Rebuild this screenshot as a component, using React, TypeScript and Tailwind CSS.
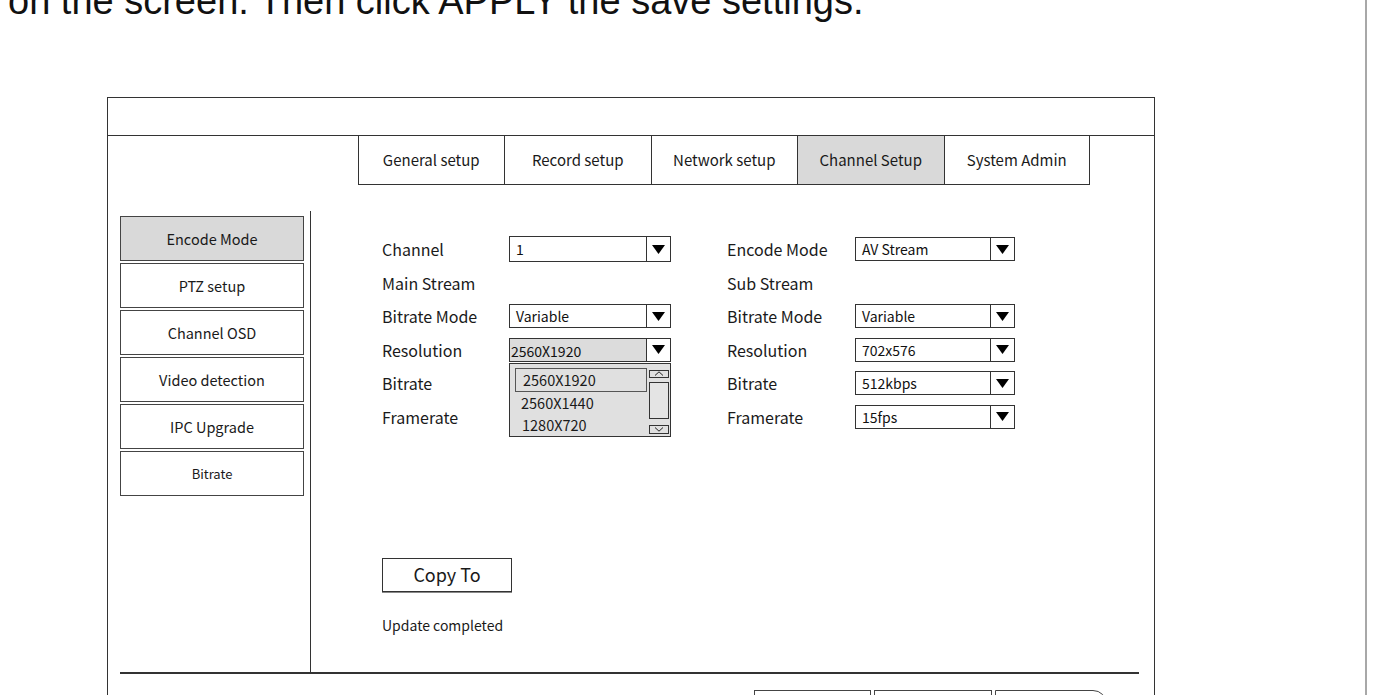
import React from 'react'

const ui = "font-['Noto_Sans_CJK_SC','Noto_Sans',sans-serif]"

type Row = {
  left: string
  leftValue?: string
  right: string
  rightValue?: string
}

const rows: Row[] = [
  { left: 'Channel', leftValue: '1', right: 'Encode Mode', rightValue: 'AV Stream' },
  { left: 'Main Stream', right: 'Sub Stream' },
  { left: 'Bitrate Mode', leftValue: 'Variable', right: 'Bitrate Mode', rightValue: 'Variable' },
  { left: 'Resolution', leftValue: '2560X1920', right: 'Resolution', rightValue: '702x576' },
  { left: 'Bitrate', right: 'Bitrate', rightValue: '512kbps' },
  { left: 'Framerate', right: 'Framerate', rightValue: '15fps' },
]

const tabs = ['General setup', 'Record setup', 'Network setup', 'Channel Setup', 'System Admin']
const menu = ['Encode Mode', 'PTZ setup', 'Channel OSD', 'Video detection', 'IPC Upgrade', 'Bitrate']

function Arrow() {
  return (
    <svg width="13" height="9" viewBox="0 0 13 9">
      <path d="M0 0h13L6.5 9z" fill="#000" />
    </svg>
  )
}

function Chevron({ up }: { up?: boolean }) {
  return (
    <svg width="10" height="5" viewBox="0 0 10 5">
      <path d={up ? 'M1 4.5L5 0.8L9 4.5' : 'M1 0.5L5 4.2L9 0.5'} fill="none" stroke="#222" strokeWidth="1" />
    </svg>
  )
}

function Dropdown() {
  return (
    <div className="absolute -left-px top-full z-10 mt-[2px] flex h-[74px] w-[162px] border border-[#333] bg-[#e0e0e0]">
      <div className="flex flex-1 flex-col pl-[5px] pt-[4px] text-[14.5px] leading-none">
        <div className="flex h-[24px] w-[132px] items-center border-[1.5px] border-[#555] pl-[7px]">2560X1920</div>
        <div className="flex h-[22px] items-center pl-[6px]">2560X1440</div>
        <div className="flex h-[22px] items-center pl-[7px]">1280X720</div>
      </div>
      <div className="mr-[1px] flex w-[20px] flex-col pt-[6px]">
        <div className="flex h-[8px] items-center justify-center border border-[#333]">
          <Chevron up />
        </div>
        <div className="mt-[4px] h-[37px] border border-[#333] bg-[#e4e4e4]" />
        <div className="mt-[6px] flex h-[9px] items-center justify-center border border-[#333]">
          <Chevron />
        </div>
      </div>
    </div>
  )
}

function Select({ value, tall, shaded, open, wide }: { value: string; tall?: boolean; shaded?: boolean; open?: boolean; wide?: boolean }) {
  return (
    <div
      className={`relative flex border border-[#333] bg-white ${tall ? 'h-[26px]' : 'h-[24px]'} ${wide ? 'w-[162px]' : 'w-[160px]'}`}
    >
      <div
        className={`flex flex-1 items-center text-[14px] leading-none text-[#111] ${shaded ? 'bg-[#dcdcdc] pl-[1px] pt-[3px]' : 'pl-[6px]'}`}
      >
        {value}
      </div>
      <div className="flex w-[24px] items-center justify-center border-l border-[#333]">
        <Arrow />
      </div>
      {open && <Dropdown />}
    </div>
  )
}

export default function App() {
  return (
    <div className={`h-[695px] w-[1367px] overflow-hidden border-r-2 border-[#a8a8a8] bg-white text-[#1a1a1a] ${ui}`}>
      <p className="-mt-[18px] ml-[8px] whitespace-nowrap font-['Liberation_Sans',Arial,sans-serif] text-[38px] leading-[38px] text-[#111]">
        on the screen. Then click APPLY the save settings.
      </p>

      {/* Setup window */}
      <div className="ml-[107px] mt-[76.5px] w-[1048px] border-[1.5px] border-[#333]">
        <div className="h-[38.5px] border-b-[1.5px] border-[#333]" />

        <div className="ml-[249.5px] flex">
          {tabs.map((t, i) => (
            <div
              key={t}
              className={`flex h-[48.5px] w-[146.5px] items-center justify-center border-b-[1.5px] border-l-[1.5px] border-[#333] pt-[1px] text-[15px] ${i === 4 ? 'border-r-[1.5px]' : ''} ${i === 3 ? 'bg-[#d9d9d9]' : ''}`}
            >
              {t}
            </div>
          ))}
        </div>

        <div className="mt-[26px] flex">
          {/* Side menu */}
          <div className="ml-[12px] flex h-[461px] w-[191px] flex-col gap-[2px] border-r-[1.5px] border-[#333] pt-[5.5px]">
            {menu.map((m, i) => (
              <div
                key={m}
                className={`flex h-[45px] w-[184px] items-center justify-center border-[1.5px] border-[#444] ${i === 5 ? 'text-[13px]' : 'text-[14.5px]'} ${i === 0 ? 'bg-[#d9d9d9]' : 'bg-white'}`}
              >
                {m}
              </div>
            ))}
          </div>

          {/* Form */}
          <div className="flex flex-col pl-[71px] pt-[22px]">
            <div className="grid grid-cols-[127px_162px_184px_160px] text-[16px]">
              {rows.map((r) => (
                <React.Fragment key={r.left + r.right}>
                  <div className="flex h-[33.5px] items-center">{r.left}</div>
                  <div className="flex h-[33.5px] items-center">
                    {r.leftValue && (
                      <Select
                        value={r.leftValue}
                        wide
                        tall={r.left === 'Channel'}
                        shaded={r.left === 'Resolution'}
                        open={r.left === 'Resolution'}
                      />
                    )}
                  </div>
                  <div className="flex h-[33.5px] items-center pl-[56px]">{r.right}</div>
                  <div className="flex h-[33.5px] items-center">{r.rightValue && <Select value={r.rightValue} />}</div>
                </React.Fragment>
              ))}
            </div>

            <button className="mt-[124px] flex h-[34px] w-[130px] items-center justify-center border border-[#333] text-[18px] shadow-[0_1px_0_#888]">
              Copy To
            </button>
            <p className="mt-[23px] text-[14px] leading-[20px]">Update completed</p>
          </div>
        </div>

        <div className="ml-[12px] mr-[15px] h-[2px] bg-[#333]" />

        <div className="ml-[645.5px] mt-[16px] flex gap-[3px]">
          <div className="h-[30px] w-[117px] border-[1.5px] border-[#444]" />
          <div className="h-[30px] w-[118px] border-[1.5px] border-[#444]" />
          <div className="h-[30px] w-[112px] rounded-tr-[14px] border-[1.5px] border-[#444]" />
        </div>
      </div>
    </div>
  )
}
